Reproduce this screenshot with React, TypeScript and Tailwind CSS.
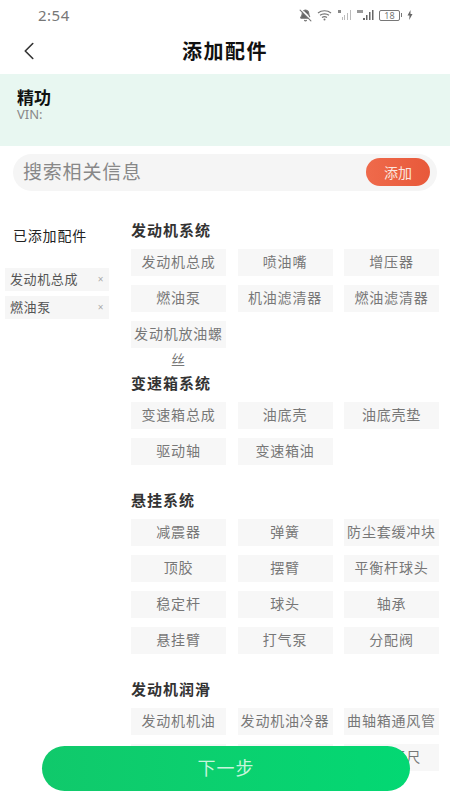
import React from 'react';
import { ChevronLeft, BellOff } from 'lucide-react';

interface Section {
  title: string;
  parts: string[];
  className: string;
}

const sections: Section[] = [
  {
    title: '发动机系统',
    parts: ['发动机总成', '喷油嘴', '增压器', '燃油泵', '机油滤清器', '燃油滤清器', '发动机放油螺丝'],
    className: 'h-[126px]',
  },
  {
    title: '变速箱系统',
    parts: ['变速箱总成', '油底壳', '油底壳垫', '驱动轴', '变速箱油'],
    className: 'h-[90px]',
  },
  {
    title: '悬挂系统',
    parts: ['减震器', '弹簧', '防尘套缓冲块', '顶胶', '摆臂', '平衡杆球头', '稳定杆', '球头', '轴承', '悬挂臂', '打气泵', '分配阀'],
    className: 'h-[162px]',
  },
  {
    title: '发动机润滑',
    parts: ['发动机机油', '发动机油冷器', '曲轴箱通风管', '机油泵', '机油滤芯', '机油标尺'],
    className: 'h-[63px]',
  },
];

function StatusBar() {
  return (
    <div className="flex h-[30px] items-center justify-between pl-[38px] pr-[37px] text-[#777]">
      <span className="text-[15px] leading-none tracking-[0.5px]">2:54</span>
      <div className="flex items-center gap-[5px]">
        <BellOff size={13} fill="#666" strokeWidth={2} />
        <svg width="15" height="12" viewBox="0 0 15 12" fill="none" stroke="#777" strokeWidth="1.2">
          <path d="M1 4c3.600-3 9.400-3 13 0M3 6.300c2.500-2 6.500-2 9 0M5 8.500c1.500-1 3.500-1 5 0" />
          <circle cx="7.500" cy="10.500" r="1" fill="#777" stroke="none" />
        </svg>
        <svg width="15" height="12" viewBox="0 0 15 12" fill="#bbb">
          <rect x="1" y="1" width="3" height="3" fill="#888" />
          <rect x="5" y="8" width="1" height="3" />
          <rect x="7" y="6" width="1" height="5" />
          <rect x="10" y="4" width="1" height="7" />
          <rect x="13" y="1" width="1" height="10" />
        </svg>
        <svg width="17" height="12" viewBox="0 0 17 12" fill="#666">
          <rect x="0" y="1" width="6" height="3" fill="#999" />
          <rect x="6" y="9" width="2" height="2" />
          <rect x="9" y="6" width="1.500" height="5" />
          <rect x="12" y="3" width="1.500" height="8" />
          <rect x="15" y="1" width="1.500" height="10" />
        </svg>
        <div className="flex items-center gap-[1px]">
          <div className="flex h-[11px] w-[21px] items-center justify-center rounded-[2px] border border-[#777] text-[9px] leading-none">18</div>
          <div className="h-[4px] w-[1px] bg-[#777]" />
        </div>
        <svg width="6" height="10" viewBox="0 0 6 10" fill="#666">
          <path d="M3.500 0 0.500 5.500h2L2.200 10l3.300-6h-2z" />
        </svg>
      </div>
    </div>
  );
}

export default function App() {
  return (
    <div className="relative h-[800px] w-[450px] overflow-hidden bg-white font-['Noto_Sans','Noto_Sans_CJK_SC',sans-serif]">
      <StatusBar />

      {/* Title bar */}
      <div className="relative flex h-[44px] items-center justify-center">
        <ChevronLeft size={30} strokeWidth={1.300} className="absolute left-[14px] top-[6px] text-[#333]" />
        <h1 className="text-[20px] font-bold tracking-[1.500px] text-[#111]">添加配件</h1>
      </div>

      {/* Vehicle */}
      <div className="h-[72px] bg-[#e8f7f1] pl-[17px] pt-[14px]">
        <div className="text-[17px] font-bold leading-[20px] text-[#111]">精功</div>
        <div className="text-[13px] leading-[13px] text-[#888]">VIN:</div>
      </div>

      {/* Search */}
      <div className="mx-[13px] mt-[8px] flex h-[37px] w-[424px] items-center justify-between rounded-full bg-[#f5f5f5] pl-[10px] pr-[7px]">
        <span className="text-[19px] tracking-[0.8px] text-[#888]">搜索相关信息</span>
        <button className="mb-[1px] h-[28px] w-[64px] rounded-full bg-gradient-to-r from-[#ef6a4b] to-[#e8593a] text-[14px] text-[#fbe6df]">添加</button>
      </div>

      <div className="mt-[31px] flex">
        {/* Added parts */}
        <div className="ml-[5px] w-[104px] shrink-0">
          <div className="pl-[8px] pt-[4px] text-[14px] leading-[20px] tracking-[0.8px] text-[#222]">已添加配件</div>
          <div className="mt-[22px] flex flex-col gap-[5px]">
            {['发动机总成', '燃油泵'].map(name => (
              <div key={name} className="flex h-[23px] items-center justify-between bg-[#f6f6f6] pl-[5px] pr-[5px] text-[13px] tracking-[0.6px] text-[#555]">
                <span>{name}</span>
                <span className="text-[10px] text-[#aaa]">×</span>
              </div>
            ))}
          </div>
        </div>

        {/* Catalogue */}
        <div className="ml-[22px] w-[308px] shrink-0">
          {sections.map(section => (
            <div key={section.title}>
              <h2 className="h-[18px] text-[15px] font-bold leading-[16px] tracking-[1px] text-[#333]">{section.title}</h2>
              <div className={`mt-[9px] grid grid-cols-[95px_95px_95px] content-start gap-x-[11.500px] gap-y-[9px] ${section.className}`}>
                {section.parts.map(part => (
                  <div
                    key={part}
                    className="h-[27px] bg-[#f7f7f7] text-center text-[14px] leading-[26px] tracking-[0.8px] text-[#777]"
                  >
                    {part}
                  </div>
                ))}
              </div>
            </div>
          ))}
        </div>
      </div>

      {/* Next */}
      <button className="absolute left-[42px] top-[746px] h-[45px] w-[368px] rounded-full bg-gradient-to-r from-[#10c96b] to-[#03d873] text-[18px] tracking-[1px] text-[#c8f5dc]">
        下一步
      </button>
    </div>
  );
}
